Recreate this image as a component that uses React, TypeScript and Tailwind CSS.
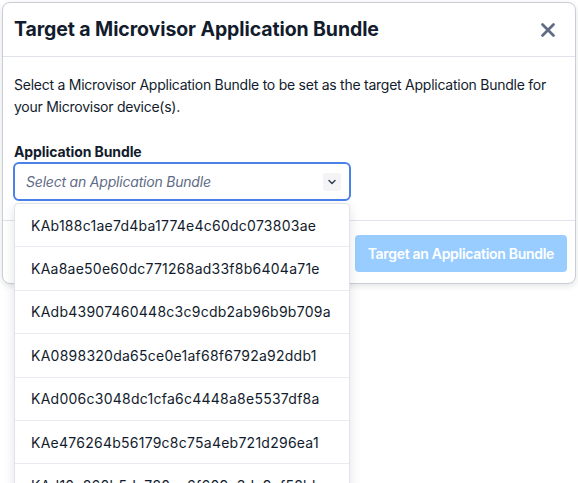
import { X, ChevronDown } from 'lucide-react';

const bundles = [
  'KAb188c1ae7d4ba1774e4c60dc073803ae',
  'KAa8ae50e60dc771268ad33f8b6404a71e',
  'KAdb43907460448c3c9cdb2ab96b9b709a',
  'KA0898320da65ce0e1af68f6792a92ddb1',
  'KAd006c3048dc1cfa6c4448a8e5537df8a',
  'KAe476264b56179c8c75a4eb721d296ea1',
  'KAd10c860b5dc720ee6f609c3dc9ef58bb',
  'KA3f0a1c2b7e9d84a6c05b1f2e3d4c5b6a',
];

export default function App() {
  return (
    <div className="h-[483px] overflow-hidden p-[2px] font-['Inter',sans-serif] text-[#121c2d]">
      <div className="rounded-lg border border-[#cacdd8] bg-white shadow-[0_2px_6px_rgba(18,28,45,0.12)]">
        {/* Header */}
        <div className="flex h-[54px] items-center justify-between border-b border-[#e1e3ea] pl-[11px] pr-[16px]">
          <h2 className="text-[19.5px] font-bold tracking-[-0.1px]">Target a Microvisor Application Bundle</h2>
          <X className="h-[22px] w-[22px] text-[#606b85]" strokeWidth={3} />
        </div>

        {/* Body */}
        <div className="px-[11px] pb-[19px] pt-[17px]">
          <p className="text-[14px] leading-[22px] tracking-[-0.25px]">
            Select a Microvisor Application Bundle to be set as the target Application Bundle for your Microvisor
            device(s).
          </p>
          <label className="mt-[24px] block text-[14px] font-bold leading-[20px] tracking-[-0.1px]">
            Application Bundle
          </label>
          <div className="relative -ml-[1px] w-[338px]">
            <div className="flex h-[39px] items-center justify-between rounded-md border-2 border-[#4a82ea] pl-[11px] pr-[8px]">
              <span className="text-[14px] italic tracking-[-0.2px] text-[#606b85]">Select an Application Bundle</span>
              <span className="flex h-[18px] w-[18px] items-center justify-center rounded-[3px] bg-[#f4f4f6]">
                <ChevronDown className="h-[12px] w-[12px] text-[#3b4458]" strokeWidth={3} />
              </span>
            </div>
            <ul className="absolute left-[1px] top-[41px] z-10 w-[336px] rounded-sm border border-[#e1e3ea] bg-white shadow-[0_4px_12px_rgba(18,28,45,0.12)]">
              {bundles.map((b) => (
                <li
                  key={b}
                  className="flex h-[43.4px] items-center border-b border-[#e8eaf0] pl-[16px] text-[14px] tracking-[0.25px] text-[#121c2d]"
                >
                  {b}
                </li>
              ))}
            </ul>
          </div>
        </div>

        {/* Footer */}
        <div className="flex justify-end border-t border-[#e1e3ea] pb-[11px] pr-[8px] pt-[14px]">
          <button className="h-[37px] rounded-[4px] bg-[#99cdff] px-[13px] text-[14px] font-semibold tracking-[-0.3px] text-white">
            Target an Application Bundle
          </button>
        </div>
      </div>
    </div>
  );
}
